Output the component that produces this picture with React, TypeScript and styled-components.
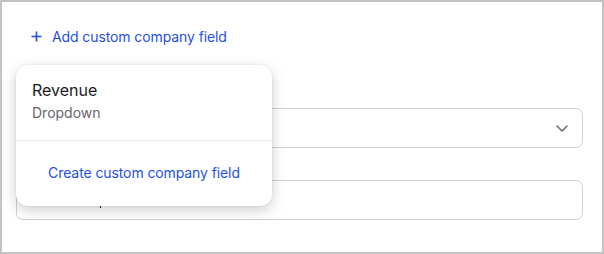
import styled, { createGlobalStyle } from 'styled-components'

const GlobalStyle = createGlobalStyle`
  html, body {
    margin: 0;
    padding: 0;
    background: #ffffff;
  }
  body {
    font-family: Inter, 'Open Sans', 'Liberation Sans', sans-serif;
    color: #1c1c1f;
  }
`

const Frame = styled.div`
  position: relative;
  box-sizing: border-box;
  width: 604px;
  height: 254px;
  border: 2px solid #c3c3c3;
  background: #fff;
  padding: 24px 19px 0 14px;
  display: flex;
  flex-direction: column;
`

const AddLink = styled.button`
  display: flex;
  align-items: center;
  gap: 10px;
  border: none;
  background: none;
  padding: 0 0 0 15px;
  height: 20px;
  font: inherit;
  font-size: 14px;
  letter-spacing: -0.1px;
  color: #1f4fe3;
  cursor: pointer;
  align-self: flex-start;
`

const Fields = styled.div`
  display: flex;
  flex-direction: column;
  gap: 8px;
  margin-top: 38px;
`

const Field = styled.div`
  display: flex;
  flex-direction: column;
  gap: 4px;
`

// field labels sit under the open popover, so only their space shows
const LabelSpace = styled.div`
  height: 20px;
`

const Box = styled.div`
  box-sizing: border-box;
  height: 40px;
  border: 1px solid #cfcfd2;
  border-radius: 7px;
  display: flex;
  align-items: center;
  justify-content: space-between;
  padding: 0 13px 0 12px;
  font-size: 14px;
  color: #1c1c2e;
`

const Value = styled.span`
  display: flex;
  align-items: center;
`

const Caret = styled.span`
  display: inline-block;
  width: 1px;
  height: 16px;
  margin-left: 71px;
  background: #1c1c3c;
`

const Chevron = styled.svg`
  width: 14px;
  height: 14px;
  color: #6d6d78;
`

const Popover = styled.div`
  position: absolute;
  left: 14px;
  top: 63px;
  width: 256px;
  height: 141px;
  background: #fff;
  border-radius: 12px;
  box-shadow: 0 4px 14px rgba(0, 0, 0, 0.2), 0 0 3px rgba(0, 0, 0, 0.06);
  display: flex;
  flex-direction: column;
`

const Option = styled.div`
  padding: 14px 16px 0;
  height: 76px;
  box-sizing: border-box;
  border-bottom: 1px solid #e6e6e8;
`

const OptionTitle = styled.div`
  font-size: 16px;
  line-height: 22px;
  color: #1a1a1e;
`

const OptionType = styled.div`
  font-size: 14px;
  line-height: 20px;
  margin-top: 2px;
  color: #66666e;
`

const CreateLink = styled.button`
  flex: 1;
  border: none;
  background: none;
  font: inherit;
  font-size: 14px;
  letter-spacing: -0.1px;
  color: #1f4fe3;
  cursor: pointer;
  padding: 0 0 2px;
`

export default function App() {
  return (
    <>
      <GlobalStyle />
      <Frame>
        <AddLink>
          <svg width="11" height="11" viewBox="0 0 11 11">
            <path d="M5.5 0.5v10M0.5 5.5h10" stroke="currentColor" strokeWidth="1.6" />
          </svg>
          Add custom company field
        </AddLink>
        <Fields>
          <Field>
            <LabelSpace />
            <Box>
              <span />
              <Chevron viewBox="0 0 14 14">
                <path d="M2 5l5 5 5-5" fill="none" stroke="currentColor" strokeWidth="1.6" strokeLinecap="round" strokeLinejoin="round" />
              </Chevron>
            </Box>
          </Field>
          <Field>
            <LabelSpace />
            <Box>
              <Value>
                <Caret />
              </Value>
            </Box>
          </Field>
        </Fields>
        <Popover>
          <Option>
            <OptionTitle>Revenue</OptionTitle>
            <OptionType>Dropdown</OptionType>
          </Option>
          <CreateLink>Create custom company field</CreateLink>
        </Popover>
      </Frame>
    </>
  )
}
